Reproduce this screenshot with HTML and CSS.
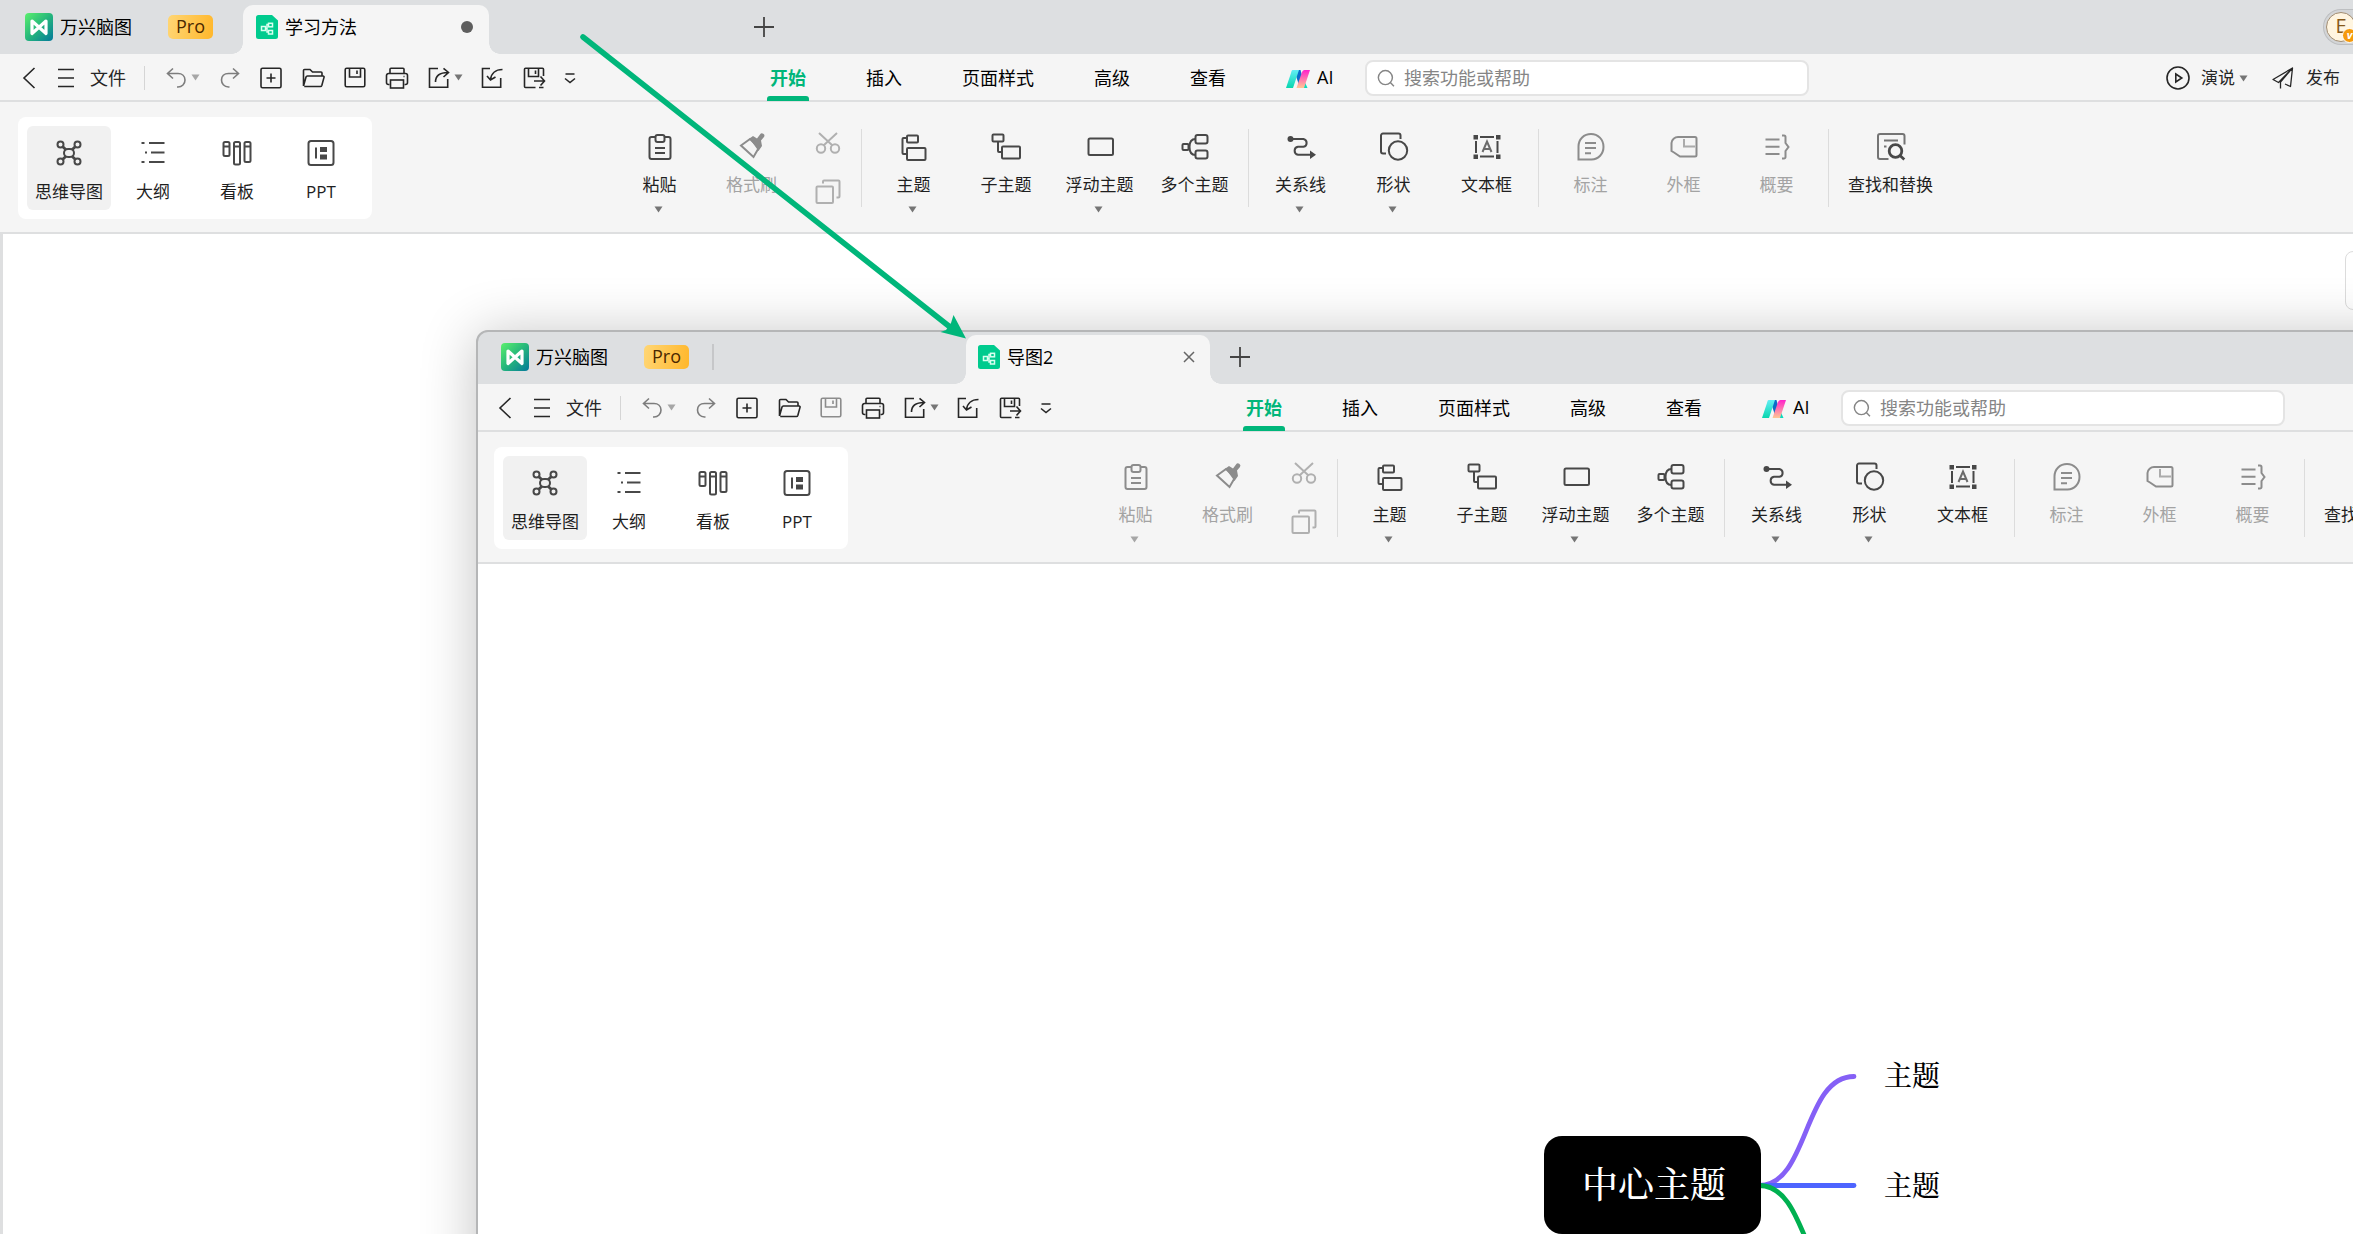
FILE: index.html
```html
<!DOCTYPE html>
<html lang="zh-CN">
<head>
    <meta charset="UTF-8">
    <meta name="viewport" content="width=device-width, initial-scale=1.0">
    <title>万兴脑图</title>
    <link rel="stylesheet" href="styles.css">
</head>
<body>

    <!-- icon sprite -->
    <svg class="sprite">
        <defs>
            <linearGradient id="g-logo" x1="0" y1="0" x2="1" y2="1"><stop offset="0" stop-color="#5bf06c"/><stop offset=".5" stop-color="#25b67c"/><stop offset="1" stop-color="#03799b"/></linearGradient>
            <linearGradient id="g-teal" x1="0" y1="0" x2="0" y2="1"><stop offset="0" stop-color="#62eef5"/><stop offset="1" stop-color="#08d6ae"/></linearGradient>
            <linearGradient id="g-pink" x1="0" y1="0" x2="0" y2="1"><stop offset="0" stop-color="#ff21cb"/><stop offset="1" stop-color="#ffc894"/></linearGradient>
        </defs>
        <symbol id="logo" viewBox="0 0 28 28"><rect width="28" height="28" rx="4" fill="url(#g-logo)" stroke="none"/><path d="M7 20.500V8l14 12.500V8L7 20.500Z" fill="none" stroke="#fff" stroke-width="3.200" stroke-linejoin="round"/></symbol>
        <symbol id="doc" viewBox="0 0 22 24"><path d="M2.500 0H16l6 5.500V21.500a2.500 2.500 0 0 1-2.500 2.500h-17A2.500 2.500 0 0 1 0 21.500v-19A2.500 2.500 0 0 1 2.500 0Z" fill="#00cb8e" stroke="none"/><g fill="none" stroke="#d8fff0" stroke-width="1.500"><rect x="5.500" y="11.500" width="4" height="4"/><rect x="12.500" y="8.300" width="4" height="3.500"/><rect x="12.500" y="15.500" width="4" height="3.500"/><path d="M9.500 13.500h1.500M12.500 9.500H11v7.500h1.500"/></g></symbol>
        <symbol id="plus" viewBox="0 0 20 20"><path d="M10 0v20M0 10h20" stroke-width="1.800"/></symbol>
        <symbol id="close" viewBox="0 0 12 12"><path d="M1 1l10 10M11 1L1 11" stroke-width="1.500"/></symbol>
        <symbol id="caret" viewBox="0 0 8 7"><path d="M0 .5h8L4 6.500Z" fill="currentColor" stroke="none"/></symbol>

        <symbol id="back" viewBox="0 0 24 24"><path d="M17.500 2L7 12l10.500 10"/></symbol>
        <symbol id="menu" viewBox="0 0 24 24"><path d="M4 3.500h16M4 12h16M4 20.500h16"/></symbol>
        <symbol id="undo" viewBox="0 0 24 24"><path d="M9 2.500L3.500 7.500l5.500 5M4 7.500h10c4 0 7 2.500 7 6.500s-3 7-7 7h-1"/></symbol>
        <symbol id="redo" viewBox="0 0 24 24"><path d="M15 2.500l5.500 5-5.500 5M20 7.500H10.500C6 7.500 3.500 10.500 3.500 14s2.500 7 7 7h1"/></symbol>
        <symbol id="new" viewBox="0 0 24 24"><rect x="2" y="2.200" width="20" height="19.600" rx="1.500"/><path d="M12 7.500v9M7.500 12h9"/></symbol>
        <symbol id="open" viewBox="0 0 24 24"><path d="M2.500 20V4.500a1 1 0 0 1 1-1h5.500L11.500 6H20a1 1 0 0 1 1 1v3M2.500 20l2.500-9a1.500 1.500 0 0 1 1.400-1h15.600a1 1 0 0 1 1 1.400L20.800 19.500a1.500 1.500 0 0 1-1.500 1H3.300"/></symbol>
        <symbol id="save" viewBox="0 0 24 24"><rect x="2.200" y="2.200" width="19.600" height="18.600" rx="1.500"/><path d="M6.500 2.500v8.500h11V2.500M14 4.500v3.500"/></symbol>
        <symbol id="print" viewBox="0 0 24 24"><path d="M5 7.500V3.200a1 1 0 0 1 1-1h12a1 1 0 0 1 1 1v4.300M4.500 18.500h-1A2 2 0 0 1 1.500 16.500v-7A2 2 0 0 1 3.500 7.500h17a2 2 0 0 1 2 2v7a2 2 0 0 1-2 2h-1"/><rect x="5.500" y="14" width="13" height="8"/><path d="M18.500 10.500h1"/></symbol>
        <symbol id="export" viewBox="0 0 24 24"><path d="M11 2.500H2.500v18.700h18.200V13M8.500 16c0-5.500 3.500-9.500 12.500-9.500M16.500 2.300L21.500 6.500l-5 4.500"/></symbol>
        <symbol id="import" viewBox="0 0 24 24"><path d="M10 2.500H2.500v18.700h18.200V12M22.500 3.500c-7 0-11.500 4-12 10.500M7 10l3.500 4 5-3"/></symbol>
        <symbol id="saveas" viewBox="0 0 24 24"><path d="M13.500 21.500H3.500a1 1 0 0 1-1-1V3.200a1 1 0 0 1 1-1h17a1 1 0 0 1 1 1V10M6.500 2.500v8h10v-8M13.500 4.500v3.500M12 15h10M18.500 10.500l4 4.500-4 4.500M17 21.500h4.500"/></symbol>
        <symbol id="more" viewBox="0 0 24 24"><path d="M7.500 8h9M7 12.500l5 4 5-4"/></symbol>
        <symbol id="search" viewBox="0 0 20 20"><circle cx="9.300" cy="9" r="7.800"/><path d="M14.800 14.500l4 4"/></symbol>
        <symbol id="play" viewBox="0 0 24 24"><circle cx="12" cy="12" r="11"/><path d="M9.800 8l6 4-6 4Z"/></symbol>
        <symbol id="plane" viewBox="0 0 24 24"><path d="M21.500 2L2 13.500l5.500 3L21.500 2l-2 18.500-5.500-2.500M9.500 22.500V16L21.500 2" stroke-width="1.300" stroke-linejoin="round"/></symbol>
        <symbol id="ai" viewBox="0 0 24 18"><path d="M12 0h2.500L17 9l-4 6-3-9Z" fill="#0a6dc9"/><path d="M17 8l4.500 10H16Z" fill="#09dcc0"/><path d="M6.500 0H13L7 18H0L5 3Q5.500 0 6.500 0Z" fill="url(#g-teal)"/><path d="M18.500 0H24l-6 18h-7.500L16 2Q17 0 18.500 0Z" fill="url(#g-pink)"/></symbol>

        <symbol id="mindmap" viewBox="0 0 30 30"><circle cx="6.500" cy="6.500" r="3"/><circle cx="23.500" cy="6.500" r="3"/><circle cx="6.500" cy="23.500" r="3"/><circle cx="23.500" cy="23.500" r="3"/><rect x="10" y="11" width="10" height="8" rx="4"/><path d="M8.800 8.800l3.200 3M21.200 8.800l-3.200 3M8.800 21.200l3.200-3M21.200 21.200l-3.200-3" stroke-width="2.800"/></symbol>
        <symbol id="outline" viewBox="0 0 30 30"><path d="M3.500 5h3M11 5h15.500M7 14.500h2M13 14.500h13.500M3.500 24h3M11 24h15.500"/></symbol>
        <symbol id="board" viewBox="0 0 30 30"><rect x="1.500" y="4" width="6" height="14" rx="1.500"/><rect x="12" y="4" width="6" height="22.500" rx="1.500"/><rect x="22.500" y="4" width="6" height="20" rx="1.500"/><path d="M1.500 8.500h6M12 8.500h6M22.500 8.500h6"/></symbol>
        <symbol id="ppt" viewBox="0 0 30 30"><rect x="2.500" y="3" width="25" height="24" rx="2.500"/><path d="M10 9.500v11"/><path d="M14 9h7v5h-7ZM14 16.500h7v5h-7Z" fill="currentColor" stroke="none"/></symbol>

        <symbol id="paste" viewBox="0 0 30 30"><path d="M10 5H6.500A2 2 0 0 0 4.500 7v18a2 2 0 0 0 2 2h17a2 2 0 0 0 2-2V7a2 2 0 0 0-2-2H20"/><rect x="10.500" y="3" width="9" height="7" rx="2"/><path d="M10 16h10M10 21h10"/></symbol>
        <symbol id="brush" viewBox="0 0 30 30"><path d="M4 13.500l9-6.500L22 15.500l-5.500 9.500Z"/><path d="M12.500 6.500L16 4l4 2.500 3-4a2.300 2.300 0 0 1 4 2.500L24 8.500l1 5.500-3.500 5Z" fill="currentColor" stroke="none"/></symbol>
        <symbol id="cut" viewBox="0 0 26 26"><circle cx="6" cy="18.500" r="4.200"/><circle cx="20" cy="18.500" r="4.200"/><path d="M4 3l13.500 12.500M22 3L8.500 15.500"/></symbol>
        <symbol id="copy" viewBox="0 0 26 26"><rect x="1.500" y="7.500" width="16.500" height="16.500" rx="1"/><path d="M8 4.500V2.500a1 1 0 0 1 1-1h14.500a1 1 0 0 1 1 1v15a1 1 0 0 1-1 1H21.500"/></symbol>
        <symbol id="topic" viewBox="0 0 30 30"><rect x="8" y="3.500" width="11" height="7" rx="1"/><rect x="8" y="16" width="18.500" height="12" rx="1"/><path d="M8 6H4.500a1 1 0 0 0-1 1v14a1 1 0 0 0 1 1H8"/></symbol>
        <symbol id="subtopic" viewBox="0 0 30 30"><rect x="1.500" y="2.500" width="11" height="7" rx="1"/><rect x="11" y="14.500" width="18" height="12" rx="1"/><path d="M7 9.500V19a1 1 0 0 0 1 1h3"/></symbol>
        <symbol id="float" viewBox="0 0 30 30"><rect x="3.500" y="6.500" width="24.500" height="16.500" rx="1.500"/></symbol>
        <symbol id="multi" viewBox="0 0 30 30"><rect x="2.500" y="12" width="6" height="6" rx="1"/><rect x="15.500" y="3" width="12" height="8.500" rx="2"/><rect x="15.500" y="18.500" width="12" height="8" rx="2"/><path d="M15.500 7c-4 0-6 3-6 8s2 8 6 8"/></symbol>
        <symbol id="relation" viewBox="0 0 30 30"><path d="M5 7h12.500a4 4 0 0 1 0 7.800H12a4 4 0 0 0 0 7.900h13"/><circle cx="4.500" cy="7" r="3" fill="currentColor" stroke="none"/><path d="M24 18.500l6 4.200-6 4.300Z" fill="currentColor" stroke="none"/></symbol>
        <symbol id="shape" viewBox="0 0 30 30"><path d="M7 21.500H4a2 2 0 0 1-2-2V3.500a2 2 0 0 1 2-2h15.500a2 2 0 0 1 2 2V7"/><circle cx="19" cy="18.500" r="9.200"/></symbol>
        <symbol id="textbox" viewBox="0 0 30 30"><path d="M8 5h14M8 24.500h14M4 9v12M25.500 9v12"/><path d="M1.500 3h4.500v4.500H1.500ZM24 3h4.500v4.500H24ZM1.500 22.500h4.500V27H1.500ZM24 22.500h4.500V27H24Z" fill="currentColor" stroke="none"/><path d="M10.500 20L15 9.500 19.500 20M12 17h6" opacity=".8"/></symbol>
        <symbol id="note" viewBox="0 0 30 30"><path d="M2.500 27.500V14.500C2.500 7 8 2 15 2s12.500 5.500 12.500 12.700-5 12.800-12 12.800Z"/><path d="M9 11h11M9 16h11M9 21.300h6"/></symbol>
        <symbol id="frame" viewBox="0 0 30 30"><path d="M9 5h17a1.500 1.500 0 0 1 1.500 1.500v16.500a1.500 1.500 0 0 1-1.500 1.500H11L5 20.500 2.500 19V11C2.500 7.500 6 5 9 5Z"/><path d="M15 7v7.500h11" opacity=".7"/></symbol>
        <symbol id="summary" viewBox="0 0 30 30"><path d="M3.500 7.500h14M3.500 14.700h14M3.500 22h14M20 3.500h2a1.500 1.500 0 0 1 1.500 1.500v6l3 4-3 4v6a1.500 1.500 0 0 1-1.500 1.500h-2"/></symbol>
        <symbol id="find" viewBox="0 0 30 30"><path d="M12.500 27H4a2 2 0 0 1-2-2V4a2 2 0 0 1 2-2h22.500a2 2 0 0 1 2 2v8.500M8 8.500h14M8 14.500h2.500" opacity=".75"/><circle cx="19.500" cy="19" r="6.300" stroke-width="2.800"/><path d="M24 23.500l4.300 4" stroke-width="2.800"/></symbol>
    </svg>

    <!-- menu bar and ribbon are the same in every window -->
    <template id="toolbars">
        <div class="menubar">
            <div class="quick">
                <svg><use href="#back"/></svg>
                <svg class="menu-icon"><use href="#menu"/></svg>
                <span class="file">文件</span>
                <i class="line"></i>
                <svg class="dim"><use href="#undo"/></svg><svg class="caret faint"><use href="#caret"/></svg>
                <svg class="dim redo"><use href="#redo"/></svg>
                <svg><use href="#new"/></svg>
                <svg><use href="#open"/></svg>
                <svg class="save"><use href="#save"/></svg>
                <svg><use href="#print"/></svg>
                <svg><use href="#export"/></svg><svg class="caret"><use href="#caret"/></svg>
                <svg><use href="#import"/></svg>
                <svg><use href="#saveas"/></svg>
                <svg class="more"><use href="#more"/></svg>
            </div>
            <nav class="menu">
                <a class="active">开始</a>
                <a>插入</a>
                <a>页面样式</a>
                <a>高级</a>
                <a>查看</a>
                <a class="ai"><svg><use href="#ai"/></svg>AI</a>
            </nav>
            <div class="search"><svg><use href="#search"/></svg>搜索功能或帮助</div>
            <div class="actions">
                <svg><use href="#play"/></svg><span>演说</span><svg class="caret"><use href="#caret"/></svg>
                <svg class="plane"><use href="#plane"/></svg><span>发布</span>
            </div>
        </div>
        <div class="ribbon">
            <div class="views">
                <div class="view active"><svg><use href="#mindmap"/></svg>思维导图</div>
                <div class="view"><svg><use href="#outline"/></svg>大纲</div>
                <div class="view"><svg><use href="#board"/></svg>看板</div>
                <div class="view"><svg><use href="#ppt"/></svg>PPT</div>
            </div>
            <div class="tools">
                <div class="group edit">
                    <div class="tool paste"><svg><use href="#paste"/></svg>粘贴<svg class="caret"><use href="#caret"/></svg></div>
                    <div class="tool off"><svg><use href="#brush"/></svg>格式刷</div>
                    <div class="stack"><svg><use href="#cut"/></svg><svg><use href="#copy"/></svg></div>
                </div>
                <div class="group topics">
                    <div class="tool"><svg><use href="#topic"/></svg>主题<svg class="caret"><use href="#caret"/></svg></div>
                    <div class="tool"><svg><use href="#subtopic"/></svg>子主题</div>
                    <div class="tool"><svg><use href="#float"/></svg>浮动主题<svg class="caret"><use href="#caret"/></svg></div>
                    <div class="tool"><svg><use href="#multi"/></svg>多个主题</div>
                </div>
                <div class="group">
                    <div class="tool"><svg><use href="#relation"/></svg>关系线<svg class="caret"><use href="#caret"/></svg></div>
                    <div class="tool"><svg><use href="#shape"/></svg>形状<svg class="caret"><use href="#caret"/></svg></div>
                    <div class="tool"><svg><use href="#textbox"/></svg>文本框</div>
                </div>
                <div class="group">
                    <div class="tool off"><svg><use href="#note"/></svg>标注</div>
                    <div class="tool off"><svg><use href="#frame"/></svg>外框</div>
                    <div class="tool off"><svg><use href="#summary"/></svg>概要</div>
                </div>
                <div class="group">
                    <div class="tool"><svg><use href="#find"/></svg>查找和替换</div>
                </div>
            </div>
        </div>
    </template>

    <div class="desktop">
        <div class="window main">
            <div class="titlebar">
                <div class="brand"><svg><use href="#logo"/></svg>万兴脑图<span class="pro">Pro</span></div>
                <div class="tab"><svg class="doc"><use href="#doc"/></svg>学习方法<i class="dot"></i></div>
                <svg class="add"><use href="#plus"/></svg>
                <div class="account"><div class="avatar">E</div><div class="badge">v</div></div>
            </div>
            <div class="bars"></div>
            <div class="canvas"><div class="side-panel"></div></div>
        </div>

        <div class="window blank">
            <div class="titlebar">
                <div class="brand"><svg><use href="#logo"/></svg>万兴脑图<span class="pro">Pro</span></div>
                <i class="tab-line"></i>
                <div class="tab"><svg class="doc"><use href="#doc"/></svg>导图2<svg class="close"><use href="#close"/></svg></div>
                <svg class="add"><use href="#plus"/></svg>
            </div>
            <div class="bars"></div>
            <div class="canvas">
                <svg class="branches">
                    <path d="M1283 621.500C1333 621.500 1327 512.500 1378 512.500" stroke="#8560f6"/>
                    <path d="M1283 621.500H1378" stroke="#4d64ff"/>
                    <path d="M1283 621.500C1333 621.500 1327 730 1378 730" stroke="#00b050"/>
                </svg>
                <div class="node center">中心主题</div>
                <div class="node first">主题</div>
                <div class="node second">主题</div>
            </div>
        </div>

        <!-- drag arrow between the two tabs -->
        <svg class="arrow">
            <path d="M583 37L950 327" stroke="#00b67a" stroke-width="5.600" stroke-linecap="round"/>
            <path d="M966 338.500L953.500 315 951 323 946 330 940.500 332Z" fill="#00b67a"/>
        </svg>
    </div>

    <script>
        const bars = document.getElementById("toolbars");
        document.querySelectorAll(".bars").forEach(el => {
            el.replaceWith(bars.content.cloneNode(true));
        });
    </script>

</body>
</html>
```
FILE: styles.css
```css
body {
    margin: 0;
    font-family: "Open Sans", "Noto Sans CJK SC", sans-serif;
    font-size: 18px;
    line-height: 24px;
    color: #111;
}
svg {
    display: block;
    flex: none;
    fill: none;
    stroke: currentColor;
    stroke-width: 1.6;
}
.sprite {
    position: absolute;
    width: 0;
    height: 0;
}
.desktop {
    position: relative;
    width: 2353px;
    height: 1234px;
    overflow: hidden;
    background: #fff;
}

/* windows */
.window {
    position: absolute;
    box-sizing: border-box;
    display: flex;
    flex-direction: column;
    width: 2353px;
    height: 1234px;
    background: #fff;
    white-space: nowrap;
}
.window.main {
    left: 0;
    top: 0;
}
.window.blank {
    left: 476px;
    top: 330px;
    border-radius: 12px 0 0 0;
    box-shadow: 0 4px 56px rgba(0,0,0,0.24);
}
/* frame goes over the content so both windows share one layout */
.window.blank::after {
    content: "";
    position: absolute;
    inset: 0;
    border: 2px solid #b5b6b7;
    border-radius: 12px 0 0 0;
    pointer-events: none;
}

/* title bar */
.titlebar {
    flex: none;
    display: flex;
    align-items: center;
    height: 54px;
    background: #dddfe1;
    color: #000;
}
.blank .titlebar {
    border-radius: 12px 0 0 0;
}
.brand {
    display: flex;
    align-items: center;
    width: 218px;
    padding-left: 25px;
}
.brand svg {
    width: 28px;
    height: 28px;
    margin-right: 7px;
}
.pro {
    width: 45px;
    height: 24px;
    margin-left: 36px;
    border-radius: 5px;
    background: linear-gradient(100deg, #ffd675, #ffb72b);
    color: #4a2800;
    font-weight: 500;
    line-height: 23px;
    text-align: center;
}
.tab {
    position: relative;
    align-self: flex-end;
    box-sizing: border-box;
    display: flex;
    align-items: center;
    width: 246px;
    height: 49px;
    padding: 0 16px 5px 13px;
    border-radius: 10px 10px 0 0;
    background: #f5f5f5;
}
.blank .tab {
    width: 244px;
    padding-left: 12px;
    padding-right: 15px;
}
.tab::before, .tab::after {
    content: "";
    position: absolute;
    bottom: 0;
    width: 11px;
    height: 11px;
}
.tab::before {
    left: -11px;
    background: radial-gradient(circle at 0 0, transparent 10.5px, #f5f5f5 11px);
}
.tab::after {
    right: -11px;
    background: radial-gradient(circle at 100% 0, transparent 10.5px, #f5f5f5 11px);
}
.doc {
    width: 22px;
    height: 24px;
    margin-right: 7px;
}
.dot {
    width: 12px;
    height: 12px;
    margin-left: auto;
    border-radius: 50%;
    background: #5e5e5e;
}
.close {
    width: 12px;
    height: 12px;
    margin-left: auto;
    color: #666;
}
.tab-line {
    width: 2px;
    height: 26px;
    margin-left: -7px;
    margin-right: 252px;
    background: #c6c7c9;
}
.add {
    width: 20px;
    height: 20px;
    margin-left: 265px;
    color: #444;
}
.blank .add {
    margin-left: 20px;
}
.account {
    position: relative;
    box-sizing: border-box;
    width: 30px;
    height: 36px;
    margin-left: auto;
    padding: 2px;
    border: 1px solid #bdbfc1;
    border-right: none;
    border-radius: 18px 0 0 18px;
    background: #d3d5d7;
}
.avatar {
    box-sizing: border-box;
    width: 30px;
    height: 30px;
    border: 1.5px solid #a08c72;
    border-radius: 50%;
    background: #fff5e0;
    color: #85581a;
    font-size: 20px;
    font-weight: 500;
    line-height: 26px;
    text-align: center;
}
.badge {
    position: absolute;
    left: 18px;
    top: 18px;
    width: 13px;
    height: 13px;
    border: 1.5px solid #fff;
    border-radius: 50%;
    background: #f59a0c;
    color: #fff;
    font-size: 11px;
    font-weight: bold;
    font-style: italic;
    line-height: 11px;
    text-align: center;
}

/* menu bar */
.menubar {
    flex: none;
    display: flex;
    align-items: center;
    height: 46px;
    border-bottom: 2px solid #dedfe0;
    background: #f5f5f5;
}
.menubar svg {
    width: 24px;
    height: 24px;
}
.menubar svg.caret {
    width: 9px;
    height: 7px;
    color: #757575;
}
.menubar svg.faint {
    color: #a6a6a6;
}
.quick {
    box-sizing: border-box;
    display: flex;
    align-items: center;
    gap: 18px;
    width: 770px;
    padding: 1px 0 0 17px;
    color: #262626;
}
.quick .menu-icon {
    margin-left: -5px;
}
.quick .file {
    margin-left: -6px;
}
.quick .caret {
    margin: 0 0 0 -15px;
}
.quick .redo {
    margin: 0 -1px 0 0;
}
.quick .dim {
    color: #7d7d7d;
}
.quick .line + .dim {
    margin-left: 1px;
}
.quick .caret + svg:not(.redo) {
    margin-left: -1px;
}
.quick .more {
    margin-left: -6px;
}
.blank .quick .save {
    color: #8c8c8c;
}
.line {
    width: 1px;
    height: 24px;
    background: #d5d5d5;
}
.menu {
    display: flex;
    align-self: stretch;
    gap: 60px;
    line-height: 48px;
    color: #000;
}
.menu .active {
    position: relative;
    color: #00b67a;
    font-weight: bold;
}
.menu .active::after {
    content: "";
    position: absolute;
    left: -3px;
    right: -3px;
    bottom: -1px;
    height: 5px;
    border-radius: 3px 3px 0 0;
    background: #00b67a;
}
.menu .ai {
    display: flex;
    align-items: center;
    gap: 7px;
    width: 48px;
}
.menubar .ai svg {
    width: 24px;
    height: 18px;
    margin-top: 3px;
    stroke: none;
}
.search {
    box-sizing: border-box;
    display: flex;
    align-items: center;
    gap: 9px;
    width: 444px;
    height: 36px;
    margin: 2px 0 0 31px;
    padding-left: 10px;
    border: 2px solid #e4e4e4;
    border-radius: 8px;
    background: #fff;
    color: #858585;
}
.menubar .search svg {
    width: 18px;
    height: 19px;
}
.actions {
    display: flex;
    align-items: center;
    margin-left: auto;
    padding: 2px 13px 0 0;
    color: #262626;
    font-size: 17px;
}
.actions span {
    margin-left: 11px;
}
.actions .caret {
    margin-left: 4px;
}
.actions .plane {
    margin-left: 23px;
}
.blank .actions {
    display: none;
}

/* ribbon */
.ribbon {
    flex: none;
    display: flex;
    align-items: flex-start;
    height: 130px;
    border-bottom: 2px solid #dedfe0;
    background: #f5f5f5;
    font-size: 17px;
    color: #1f1f1f;
}
.ribbon svg {
    width: 30px;
    height: 30px;
    color: #484848;
    stroke-width: 2;
}
.views {
    display: flex;
    margin: 15px 0 0 18px;
    padding: 9px;
    border-radius: 8px;
    background: #fff;
}
.view {
    box-sizing: border-box;
    display: flex;
    flex-direction: column;
    align-items: center;
    gap: 12px;
    width: 84px;
    height: 84px;
    padding-top: 12px;
    border-radius: 6px;
}
.view.active {
    background: #f1f1f1;
}
.tools {
    display: flex;
    margin-left: 253px;
}
.group {
    display: flex;
    gap: 24px;
    height: 78px;
    margin-top: 27px;
    padding-right: 17px;
}
.group.edit {
    gap: 23px;
    padding-right: 20px;
}
.group.topics {
    gap: 23px;
    padding-right: 18px;
}
.group + .group {
    padding-left: 17px;
    border-left: 1px solid #dcdcdc;
}
.tool {
    box-sizing: border-box;
    display: flex;
    flex-direction: column;
    align-items: center;
    min-width: 69px;
    padding: 3px 2px 0;
}
.topics .tool + .tool {
    position: relative;
    left: 0.5px;
}
.tool svg {
    margin-bottom: 11px;
}
.tool svg.caret {
    width: 9px;
    height: 7px;
    margin: 9px 2px 0 0;
    color: #757575;
}
.off, .blank .paste {
    color: #a3a3a3;
}
.off svg, .blank .paste svg {
    color: #8c8c8c;
}
.blank .paste svg.caret {
    color: #a6a6a6;
}
.stack {
    display: flex;
    flex-direction: column;
    gap: 23px;
    margin-left: 6px;
    padding-top: 1px;
}
.stack svg {
    width: 26px;
    height: 26px;
    color: #b0b0b0;
}

/* canvas */
.canvas {
    position: relative;
    flex: 1;
    border-left: 3px solid #dedfe0;
}
.blank .canvas {
    border-left: none;
}
.side-panel {
    position: absolute;
    right: -9px;
    top: 17px;
    width: 15px;
    height: 57px;
    border: 1.5px solid #dcdcdc;
    border-radius: 8px;
    background: #fff;
}
.branches {
    position: absolute;
    left: 0;
    top: 0;
    width: 1877px;
    height: 1000px;
    stroke-width: 4.8;
    stroke-linecap: round;
}
.node {
    position: absolute;
    font-family: "Noto Serif CJK SC", "Noto Serif SC", "Noto Sans CJK SC", serif;
    font-size: 28px;
    font-weight: 500;
    line-height: 40px;
    color: #000;
}
.node.center {
    left: 1068px;
    top: 572px;
    box-sizing: border-box;
    width: 217px;
    height: 98px;
    padding-left: 3px;
    border-radius: 18px;
    background: #000;
    color: #fff;
    font-size: 36px;
    line-height: 94px;
    text-align: center;
}
.node.first {
    left: 1408px;
    top: 490px;
}
.node.second {
    left: 1408px;
    top: 600px;
}

.arrow {
    position: absolute;
    left: 0;
    top: 0;
    width: 1000px;
    height: 360px;
    stroke: none;
}
```
